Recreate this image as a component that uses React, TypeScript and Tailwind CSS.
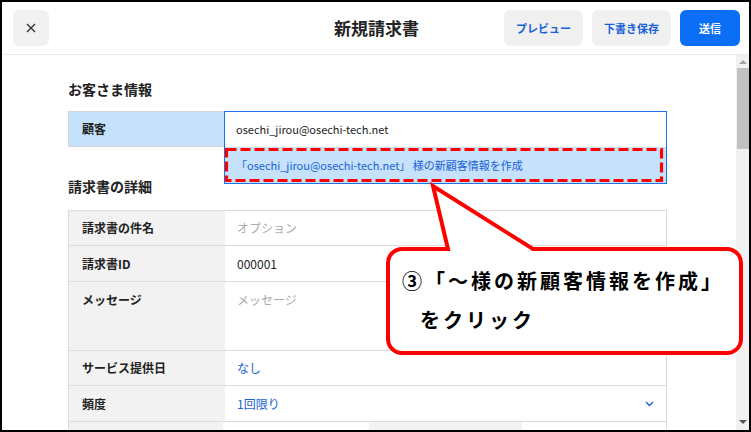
import React from 'react';

const jp = "[font-family:'Noto_Sans_CJK_JP','Noto_Sans',sans-serif]";

type RowProps = { label: string; children?: React.ReactNode; h: string; top?: boolean };

const Row = ({ label, children, h, top }: RowProps) => (
  <div className={`flex border-b border-[#dcdcdc] ${h}`}>
    <div className={`w-[156px] shrink-0 bg-[#f2f2f2] px-[13px] flex text-[12px] font-bold text-[#222] ${top ? 'items-start pt-[9px]' : 'items-center'}`}>
      {label}
    </div>
    <div className={`flex-1 px-[12px] flex text-[12px] ${top ? 'items-start pt-[9px]' : 'items-center'}`}>{children}</div>
  </div>
);

const Chevron = () => (
  <svg width="9" height="6" viewBox="0 0 9 6" fill="none">
    <path d="M1 1l3.5 3.5L8 1" stroke="#1a63d4" strokeWidth="1.4" />
  </svg>
);

export default function App() {
  return (
    <div className={`relative w-[751px] h-[432px] border-2 border-black bg-white overflow-hidden flex flex-col ${jp}`}>
      {/* header */}
      <div className="h-[53px] shrink-0 border-b border-[#ebebeb] grid grid-cols-[1fr_auto_1fr] items-center pl-[11px] pr-[9px]">
        <div>
          <button className="w-[36px] h-[36px] rounded-md bg-[#f1f1f1] flex items-center justify-center">
            <svg width="10" height="10" viewBox="0 0 10 10">
              <path d="M1 1l8 8M9 1l-8 8" stroke="#333" strokeWidth="1.4" />
            </svg>
          </button>
        </div>
        <div className="text-[17px] font-bold text-[#222]">新規請求書</div>
        <div className="flex justify-end gap-[9px]">
          <button className="w-[79px] h-[36px] rounded-md bg-[#f0f0f0] text-[11px] font-bold text-[#1760d8]">プレビュー</button>
          <button className="w-[79px] h-[36px] rounded-md bg-[#f0f0f0] text-[11px] font-bold text-[#1760d8]">下書き保存</button>
          <button className="w-[60px] h-[36px] rounded-md bg-[#0a6ff5] text-[11px] font-bold text-white">送信</button>
        </div>
      </div>

      <div className="flex-1 flex min-h-0">
        {/* main */}
        <div className="flex-1 pl-[66px] pt-[24px]">
          <div className="w-[599px]">
            <p className="text-[14px] leading-[20px] font-bold text-[#222]">お客さま情報</p>
            <div className="mt-[12px] flex h-[36px]">
              <div className="w-[156px] shrink-0 bg-[#c5e1fb] border-y border-l border-[#d4d4d4] px-[13px] flex items-center text-[12px] font-bold text-[#222]">
                顧客
              </div>
              <div className="relative flex-1">
                <div className="h-full border border-[#1a73e8] border-b-0 flex items-center px-[11px] text-[11px] text-[#222] bg-white">
                  osechi_jirou@osechi-tech.net
                </div>
                <div className="absolute left-0 right-0 top-full h-[37px] border border-t-0 border-[#1a73e8] bg-[#c5e1fb] flex items-center px-[11px] text-[11px] text-[#1a63d4]">
                  「osechi_jirou@osechi-tech.net」&nbsp;様の新顧客情報を作成
                </div>
              </div>
            </div>

            <p className="mt-[29px] text-[14px] leading-[20px] font-bold text-[#222]">請求書の詳細</p>
            <div className="mt-[14px] border-t border-x border-[#dcdcdc]">
              <Row label="請求書の件名" h="h-[35px]">
                <span className="text-[#ababab]">オプション</span>
              </Row>
              <Row label="請求書ID" h="h-[36px]">
                <span className="text-[#222]">000001</span>
              </Row>
              <Row label="メッセージ" h="h-[69px]" top>
                <span className="text-[#ababab]">メッセージ</span>
              </Row>
              <Row label="サービス提供日" h="h-[35px]">
                <span className="text-[#1a63d4]">なし</span>
              </Row>
              <Row label="頻度" h="h-[36px]">
                <div className="flex-1 flex items-center justify-between">
                  <span className="text-[#1a63d4]">1回限り</span>
                  <Chevron />
                </div>
              </Row>
              <div className="flex h-[36px]">
                <div className="w-[154px] bg-[#f2f2f2]" />
                <div className="w-[146px] bg-white" />
                <div className="w-[153px] bg-[#f2f2f2]" />
                <div className="flex-1 bg-white" />
              </div>
            </div>
          </div>
        </div>

        {/* scrollbar */}
        <div className="w-[13px] shrink-0 bg-[#f1f1f1] flex flex-col">
          <div className="h-[13px] flex items-center justify-center">
            <div className="w-0 h-0 border-x-[4px] border-x-transparent border-b-[4px] border-b-[#a3a3a3]" />
          </div>
          <div className="ml-[1px] h-[81px] bg-[#c1c1c1]" />
          <div className="flex-1" />
          <div className="h-[17px] flex items-center justify-center">
            <div className="w-0 h-0 border-x-[4px] border-x-transparent border-t-[4px] border-t-[#555]" />
          </div>
        </div>
      </div>

      {/* annotation overlay */}
      <div className="absolute -left-[2px] -top-[2px] w-[751px] h-[432px] pointer-events-none">
        <svg className="absolute left-0 top-0" width="751" height="432" viewBox="0 0 751 432">
          <rect x="226.5" y="149.5" width="435" height="31" fill="none" stroke="#ff0000" strokeWidth="3.2" strokeDasharray="10 4" />
          <path
            d="M402 249 L448 249 L433 186 L533 249 L727 249 A14 14 0 0 1 741 263 L741 339 A14 14 0 0 1 727 353 L402 353 A14 14 0 0 1 388 339 L388 263 A14 14 0 0 1 402 249 Z"
            fill="#ffffff"
            stroke="#ff0000"
            strokeWidth="4"
            strokeLinejoin="miter"
          />
        </svg>
        <div className="absolute left-[402px] top-[261px] text-[20px] leading-[39px] font-bold tracking-[3px] text-black whitespace-nowrap">
          <div>③「～様の新顧客情報を作成」</div>
          <div className="pl-[18px]">をクリック</div>
        </div>
      </div>
    </div>
  );
}
